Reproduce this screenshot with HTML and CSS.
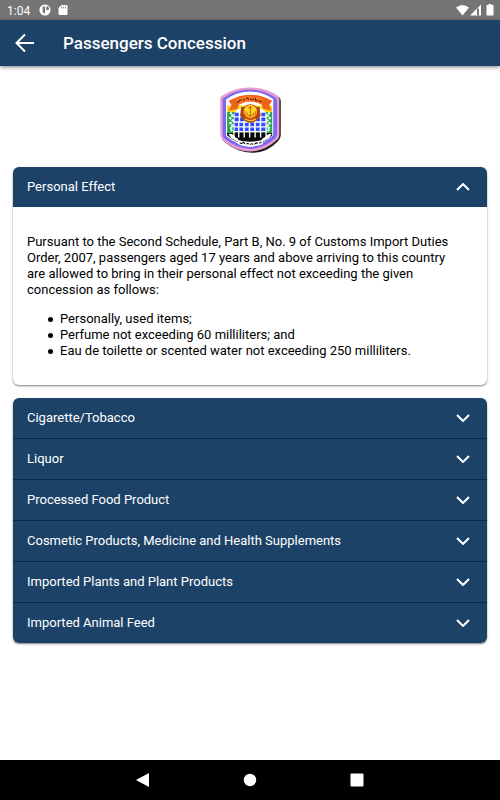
FILE: index.html
```html
<!DOCTYPE html>
<html lang="en">
<head>
<meta charset="utf-8">
<meta name="viewport" content="width=device-width, initial-scale=1">
<title>Passengers Concession</title>
<link rel="stylesheet" href="styles.css">
</head>
<body>
<div class="status">
  <span class="clock">1:04</span>
  <svg class="status-left" width="32" height="14" viewBox="0 0 32 14" aria-hidden="true">
    <circle cx="6" cy="6" r="5.600" fill="#fff"/>
    <path d="M3.600 2.500H6v7.200A4 4 0 0 1 3.600 8zM7.200 2.400h1a1.900 1.900 0 0 1 0 3.800h-1z" fill="#757575"/>
    <path d="M22.500 1H27.500q1 0 1 1v8q0 1-1 1h-7q-1 0-1-1V4z" fill="#fff"/>
    <path d="M22.500 2.500v2M24.500 2.500v2M26.500 2.500v2" stroke="#757575" stroke-width=".7"/>
  </svg>
  <svg class="status-right" width="40" height="14" viewBox="0 0 40 14" aria-hidden="true">
    <path d="M0 3.500Q6.500-1.500 13 3.500L6.500 11.500z" fill="#fff"/>
    <path d="M25 .5V11.500H14z" fill="#fff"/>
    <path d="M22 4.500v7" stroke="#757575" stroke-width="2"/>
    <path d="M32.500 0h3v1h2v10q0 .5-.5.500h-6q-.5 0-.5-.5V1h2z" fill="#fff"/>
  </svg>
</div>
<header class="appbar">
  <button class="back" type="button" aria-label="Back">
    <svg width="20" height="20" viewBox="0 0 20 20"><path d="M19 10H2M10 1.500L1.500 10l8.500 8.500" fill="none" stroke="#fff" stroke-width="2"/></svg>
  </button>
  <h1>Passengers Concession</h1>
</header>
<main>
  <svg class="crest" width="80" height="80" viewBox="3 -1 234 234" role="img" aria-label="Customs crest">
    <path d="M41 48Q75 21 124 21Q172 21 206 47Q210 50 210 58V158Q210 168 202 175Q170 209 126 209Q80 207 43 175Q37 169 37 157V57z" fill="#222"/>
    <path d="M37 43Q73 18 120 18Q168 18 202 43Q206 46 206 54V156Q206 165 199 171Q164 204 121 205Q76 204 40 172Q33 165 33 155V52Q33 46 37 43z" fill="#eb9bd2"/>
    <path d="M44 48Q79 24 120 24Q161 24 195 48Q199 51 199 57V153Q199 161 193 167Q159 196 121 198Q81 196 46 168Q40 162 40 153V55Q40 50 44 48z" fill="#7969ee"/>
    <path d="M50 53Q82 30 120 30Q156 30 188 52V158Q156 188 120 191Q82 187 50 160z" fill="#fff"/>
    <path d="M53 71H185V94H53z" fill="#ffd719"/>
    <path d="M53 90H185V152H53z" fill="#28a84b"/>
    <path d="M53 151H185V158Q158 185 120 188Q84 185 53 158z" fill="#080808"/>
    <path d="M72 97Q80 75 120 72Q161 75 169 97V150H72z" fill="#fff"/>
    <path d="M75 92h12v10H75zM153 92h12v10h-12zM75 106h12v11H75zM91 106h11v11H91zM138 106h11v11h-11zM153 106h12v11h-12z" fill="#314cff"/>
    <path d="M75 121h10v10H75zM89 121h11v10H89zM105 121h11v10h-11zM121 121h11v10h-11zM137 121h11v10h-11zM153 121h12v10h-12zM75 135h10v10H75zM89 135h11v10H89zM105 135h11v10h-11zM121 135h11v10h-11zM137 135h11v10h-11zM153 135h12v10h-12z" fill="#314cff"/>
    <path d="M74 149h94v14H74z" fill="#080808"/>
    <path d="M72 147h97M73 146v18M87 146v18M103 146v18M119 146v18M135 146v18M151 146v18M167 146v18" stroke="#fff" stroke-width="4"/>
    <path d="M62 91l8 8-8 8 8 8-8 8 8 8-8 8 8 8M178 91l-8 8 8 8-8 8 8 8-8 8 8 8-8 8" fill="none" stroke="#fff" stroke-width="6" stroke-dasharray="7 3"/>
    <path d="M94 75H148L151 101Q139 121 121 122Q100 119 91 101z" fill="#a44a18"/>
    <circle cx="121" cy="91" r="24" fill="#c93614"/>
    <circle cx="121" cy="89" r="20" fill="#ffdb20"/>
    <path d="M105 86Q103 107 121 108Q139 107 137 86M111 91Q112 101 121 102Q130 101 131 91M121 72v31M115 77h12" fill="none" stroke="#ce5b12" stroke-width="3"/>
    <path d="M105 110Q121 120 137 110" fill="none" stroke="#f1c633" stroke-width="4"/>
    <path d="M58 57Q119 21 185 57L176 70L184 86L159 81L154 68Q120 50 88 68L83 81L57 86L66 70z" fill="#eb651b"/>
    <path d="M78 54Q120 32 162 54L154 68Q120 50 87 68z" fill="#ff7622"/>
    <path d="M81 59q4 5 7-1t8-2M101 51l2 6M108 52q6-8 8 2M121 50q5 8 10 0M136 48v8q4 2 6-2M145 56q5 7 10 1" fill="none" stroke="#571a05" stroke-width="3"/>
    <path d="M57 154Q69 151 78 164L86 169L82 176L65 166zM183 154Q173 151 162 164L154 169L158 176L176 166z" fill="#fff"/>
    <path d="M82 171Q120 182 159 171L157 184Q140 190 120 191Q99 190 84 183z" fill="#fff"/>
    <path d="M90 179q5 5 8 1t7 3M109 184q5-5 8 0M121 185q5-5 8 0M133 184l5-4 5 1M147 179q5 3 6-2" fill="none" stroke="#111" stroke-width="3"/>
  </svg>
  <details class="panel" open>
    <summary>Personal Effect<svg class="chev" width="14" height="8" viewBox="0 0 14 8"><path d="M1 1l6 6 6-6"/></svg></summary>
    <div class="content">
      <p>Pursuant to the Second Schedule, Part B, No. 9 of Customs Import Duties Order, 2007, passengers aged 17 years and above arriving to this country are allowed to bring in their personal effect not exceeding the given concession as follows:</p>
      <ul>
        <li>Personally, used items;</li>
        <li>Perfume not exceeding 60 milliliters; and</li>
        <li>Eau de toilette or scented water not exceeding 250 milliliters.</li>
      </ul>
    </div>
  </details>
  <div class="panel group">
    <details><summary>Cigarette/Tobacco<svg class="chev" width="14" height="8" viewBox="0 0 14 8"><path d="M1 1l6 6 6-6"/></svg></summary></details>
    <details><summary>Liquor<svg class="chev" width="14" height="8" viewBox="0 0 14 8"><path d="M1 1l6 6 6-6"/></svg></summary></details>
    <details><summary>Processed Food Product<svg class="chev" width="14" height="8" viewBox="0 0 14 8"><path d="M1 1l6 6 6-6"/></svg></summary></details>
    <details><summary>Cosmetic Products, Medicine and Health Supplements<svg class="chev" width="14" height="8" viewBox="0 0 14 8"><path d="M1 1l6 6 6-6"/></svg></summary></details>
    <details><summary>Imported Plants and Plant Products<svg class="chev" width="14" height="8" viewBox="0 0 14 8"><path d="M1 1l6 6 6-6"/></svg></summary></details>
    <details><summary>Imported Animal Feed<svg class="chev" width="14" height="8" viewBox="0 0 14 8"><path d="M1 1l6 6 6-6"/></svg></summary></details>
  </div>
</main>
<nav class="navbar" aria-label="System">
  <button type="button" aria-label="Back"><svg width="14" height="14" viewBox="0 0 14 14"><path d="M13 .5v13q0 .5-.5.300L.8 7.400Q.2 7 .8 6.600L12.500.2q.5-.2.500.3z"/></svg></button>
  <button type="button" aria-label="Home"><svg width="14" height="14" viewBox="0 0 14 14"><circle cx="7" cy="7" r="6.200"/></svg></button>
  <button type="button" aria-label="Recent apps"><svg width="14" height="14" viewBox="0 0 14 14"><rect x=".5" y=".5" width="13" height="13" rx="1"/></svg></button>
</nav>
</body>
</html>
```
FILE: styles.css
```css
* { box-sizing: border-box; }

body {
  margin: 0;
  min-height: 100vh;
  display: flex;
  flex-direction: column;
  background: #fff;
  color: #000;
  font: 13px/16px Roboto, sans-serif;
}

svg { display: block; flex: none; }

button {
  display: flex;
  align-items: center;
  justify-content: center;
  padding: 0;
  border: 0;
  background: none;
}

.status {
  display: flex;
  align-items: center;
  height: 20px;
  padding: 2px 4px 0 7px;
  background: #757575;
  color: #fff;
}

.clock { font-size: 12px; }
.status-left { margin-left: 9px; }
.status-right { margin-left: auto; }

.appbar {
  display: flex;
  align-items: center;
  gap: 23px;
  height: 46px;
  padding: 0 10px;
  background: #1d4268;
  color: #fff;
  box-shadow: 0 1px 4px rgba(0, 0, 0, .5);
}

.back { width: 30px; height: 40px; }

h1 {
  margin: 0;
  font-size: 17px;
  line-height: 24px;
  font-weight: 500;
}

main {
  flex: 1;
  display: flex;
  flex-direction: column;
  padding: 15px 13px;
}

.crest { align-self: center; margin-bottom: 6px; }

.panel {
  margin-bottom: 13px;
  border-radius: 6px;
  overflow: hidden;
  background: #fff;
  box-shadow: 0 1px 2px rgba(0, 0, 0, .5);
}

summary {
  display: flex;
  align-items: center;
  justify-content: space-between;
  height: 40px;
  padding: 0 17px 0 14px;
  background: #1d4268;
  color: #fff;
  list-style: none;
  cursor: pointer;
}

.group details + details { border-top: 1px solid #0b2854; }

.chev path { fill: none; stroke: #fff; stroke-width: 2; }
[open] .chev { transform: rotate(180deg); }

.content { padding: 27px 28px 26px 14px; }

p { margin: 0 0 13px; }

ul {
  margin: 0;
  padding-left: 21px;
  list-style: none;
}

li {
  display: flex;
  align-items: center;
  gap: 7px;
}

li::before {
  content: "";
  flex: none;
  width: 5px;
  height: 5px;
  border-radius: 50%;
  background: #000;
}

.navbar {
  display: flex;
  align-items: center;
  justify-content: center;
  gap: 67px;
  height: 40px;
  background: #000;
}

.navbar button { width: 40px; height: 40px; }
.navbar svg { fill: #fff; }
```
